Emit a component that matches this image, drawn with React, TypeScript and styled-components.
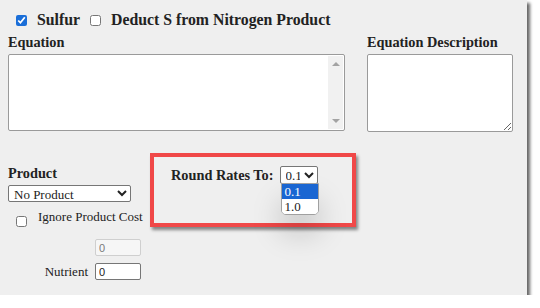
import styled, { createGlobalStyle } from "styled-components";

const GlobalStyle = createGlobalStyle`
  body {
    margin: 0;
    background: #ffffff;
    font-family: "Liberation Serif", "Times New Roman", serif;
    color: #222;
  }
`;

export default function App() {
  return (
    <>
      <GlobalStyle />
      <Panel>
        <Header>
          <Check type="checkbox" defaultChecked />
          <HeadLabel>Sulfur</HeadLabel>
          <Check type="checkbox" />
          <HeadLabel>Deduct S from Nitrogen Product</HeadLabel>
        </Header>

        <EquationGrid>
          <Field>
            <Label>Equation</Label>
            <ScrollBox>
              <EquationArea />
              <Scrollbar>
                <Arrow $dir="up" />
                <Arrow $dir="down" />
              </Scrollbar>
            </ScrollBox>
          </Field>
          <Field>
            <Label>Equation Description</Label>
            <DescriptionArea />
          </Field>
        </EquationGrid>

        <Bottom>
          <ProductColumn>
            <Label>Product</Label>
            <ProductSelect defaultValue="none">
              <option value="none">No Product</option>
            </ProductSelect>
            <IgnoreRow>
              <SmallCheck type="checkbox" />
              <SmallText>Ignore Product Cost</SmallText>
            </IgnoreRow>
            <InputRow>
              <NumberInput defaultValue="0" disabled />
            </InputRow>
            <InputRow>
              <SmallText>Nutrient</SmallText>
              <NumberInput defaultValue="0" />
            </InputRow>
          </ProductColumn>

          <Highlight>
            <RoundRow>
              <Label>Round Rates To:</Label>
              <SelectWrap>
                <RateSelect defaultValue="0.1">
                  <option value="0.1">0.1</option>
                  <option value="1.0">1.0</option>
                </RateSelect>
                <OptionList>
                  <OptionItem $active>0.1</OptionItem>
                  <OptionItem>1.0</OptionItem>
                </OptionList>
              </SelectWrap>
            </RoundRow>
          </Highlight>
        </Bottom>
      </Panel>
    </>
  );
}

const serif = `"Liberation Serif", "Times New Roman", serif`;

const Panel = styled.div`
  width: 527px;
  height: 295px;
  background: #efefef;
  box-shadow: 3px 3px 3px rgba(0, 0, 0, 0.6);
  padding: 0 8px;
  box-sizing: border-box;
`;

const Header = styled.div`
  display: flex;
  align-items: center;
  height: 20px;
  padding-top: 10px;
  padding-left: 7px;
`;

const Check = styled.input`
  width: 11px;
  height: 11px;
  margin: 0 10px 0 1px;
  accent-color: #1a6ed8;
`;

const HeadLabel = styled.span`
  font-family: ${serif};
  font-size: 15.8px;
  font-weight: 700;
  margin-right: 9px;
`;

const EquationGrid = styled.div`
  display: grid;
  grid-template-columns: 337px 146px;
  column-gap: 22px;
  margin-top: 4px;
`;

const Field = styled.div`
  display: flex;
  flex-direction: column;
`;

const Label = styled.div`
  font-family: ${serif};
  font-size: 14.3px;
  font-weight: 700;
  line-height: 17px;
  white-space: nowrap;
`;

const ScrollBox = styled.div`
  margin-top: 3px;
  height: 77px;
  box-sizing: border-box;
  display: flex;
  border: 1px solid #9a9a9a;
  border-radius: 2px;
  background: #fff;
  overflow: hidden;
`;

const EquationArea = styled.textarea`
  flex: 1;
  border: none;
  resize: none;
  outline: none;
  background: transparent;
`;

const Scrollbar = styled.div`
  width: 15px;
  margin: 1px 1px 1px 0;
  background: #f1f1f1;
  display: flex;
  flex-direction: column;
  justify-content: space-between;
  align-items: center;
  padding: 6px 0;
`;

const Arrow = styled.div<{ $dir: "up" | "down" }>`
  width: 0;
  height: 0;
  border-left: 4px solid transparent;
  border-right: 4px solid transparent;
  ${(p) =>
    p.$dir === "up"
      ? "border-bottom: 4px solid #a3a3a3;"
      : "border-top: 4px solid #a3a3a3;"}
`;

const DescriptionArea = styled.textarea`
  margin-top: 3px;
  height: 78px;
  box-sizing: border-box;
  border: 1px solid #9a9a9a;
  border-radius: 2px;
  background: #fff;
`;

const Bottom = styled.div`
  display: flex;
  align-items: flex-start;
  margin-top: 21px;
`;

const ProductColumn = styled.div`
  width: 142px;
  padding-top: 12px;
  display: flex;
  flex-direction: column;
`;

const ProductSelect = styled.select`
  margin-top: 3px;
  width: 123px;
  height: 17px;
  font-family: ${serif};
  font-size: 13px;
  padding: 0 1px;
  border: 1px solid #767676;
  border-radius: 2px;
  background: #fff;
  color: #222;
`;

const IgnoreRow = styled.div`
  display: flex;
  align-items: flex-start;
  margin-top: 7px;
  height: 23px;
`;

const SmallCheck = styled.input`
  width: 11px;
  height: 11px;
  margin: 7px 11px 0 8px;
  flex-shrink: 0;
`;

const SmallText = styled.span`
  font-family: ${serif};
  font-size: 13px;
  line-height: 16px;
  white-space: nowrap;
  margin-right: 7px;
`;

const InputRow = styled.div`
  display: flex;
  justify-content: flex-end;
  align-items: center;
  width: 133px;
  margin-top: 7px;
`;

const NumberInput = styled.input`
  width: 46px;
  height: 17px;
  box-sizing: border-box;
  padding: 0 3px;
  font-family: "Liberation Sans", Arial, sans-serif;
  font-size: 11px;
  border: 1px solid #767676;
  border-radius: 2px;
  background: #fff;
  color: #222;

  &:disabled {
    background: #f6f6f6;
    border-color: #cfcfcf;
    color: #7a7a7a;
  }
`;

const Highlight = styled.div`
  width: 206px;
  height: 74px;
  box-sizing: border-box;
  border: 4px solid #f04848;
  box-shadow: 2px 3px 3px rgba(0, 0, 0, 0.45);
  padding: 9px 0 0 17px;
`;

const RoundRow = styled.div`
  display: flex;
  align-items: center;
  gap: 6px;
`;

const SelectWrap = styled.div`
  position: relative;
`;

const RateSelect = styled.select`
  width: 38px;
  height: 18px;
  font-family: ${serif};
  font-size: 13px;
  padding: 0 1px;
  border: 1px solid #767676;
  border-radius: 2px;
  background: #fff;
  color: #222;
`;

const OptionList = styled.div`
  position: absolute;
  top: 17px;
  left: 1px;
  width: 36px;
  background: #fff;
  border: 1px solid #a0a0a0;
  border-radius: 0 0 5px 5px;
  box-shadow: 0 18px 30px rgba(0, 0, 0, 0.18);
  overflow: hidden;
`;

const OptionItem = styled.div<{ $active?: boolean }>`
  height: 15px;
  line-height: 15px;
  padding-left: 3px;
  font-family: ${serif};
  font-size: 13px;
  background: ${(p) => (p.$active ? "#1a66d2" : "#fff")};
  color: ${(p) => (p.$active ? "#fff" : "#222")};
`;
